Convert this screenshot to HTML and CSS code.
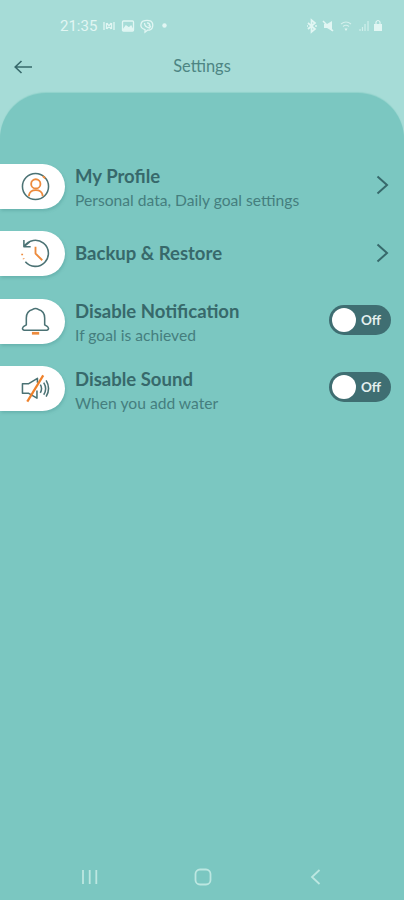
FILE: index.html
```html
<!DOCTYPE html>
<html lang="en">
<head>
<meta charset="utf-8">
<title>Settings</title>
<link rel="stylesheet" href="styles.css">
</head>
<body>
<div class="screen">
  <div class="status">
    <span class="clock">21:35</span>
    <svg class="status-left" width="70" height="16" viewBox="0 0 70 16" fill="none" stroke="currentColor" stroke-width="1.3">
      <path d="M2 4v8M4.500 5v6M12 4v8M9.500 5v6M5 5l4 6M9 5l-4 6"/>
      <rect x="20.500" y="3" width="11" height="10" rx="1"/><path d="M21 12l3-4 3 2 2-2 2 4z" fill="currentColor"/>
      <path d="M41 3.200q4-1.500 8 0 2.500 2 1.500 6-1 3-5 3l-2.500 2v-2.500Q38 10 39 6q.4-2 2-2.800z"/><path d="M42.500 5q0 4 5 5l1-1.500-2-1M45 4.800q3 .2 3 3"/>
      <circle cx="62.500" cy="7.500" r="2.200" fill="currentColor" stroke="none"/>
    </svg>
    <svg class="status-right" width="80" height="16" viewBox="0 0 80 16" fill="none" stroke="currentColor" stroke-width="1.200">
      <path d="M3 5l7 6-3.500 3V2L10 5l-7 6M2 8h1M10 8h2" stroke-width="1.700"/>
      <path d="M19 6h3l5-3v10l-5-3h-3z" fill="currentColor" stroke="none"/><path d="M18 3l10 10" stroke-width="1.500"/>
      <path d="M36 6q5-4 10 0M38 8.500q3-2.500 6 0" opacity=".75"/><path d="M39.500 10.500h3L41 13z" fill="currentColor" stroke="none"/>
      <path d="M55 13v-2M57.500 13V9M60 13V6M63 13V3" opacity=".7"/>
      <path d="M69 6h8v7h-8z" fill="currentColor" stroke="none"/><path d="M71 7V4q2-3 4 0v3"/>
    </svg>
  </div>
  <header class="header">
    <svg class="back" width="20" height="16" viewBox="0 0 20 16"><path d="M18 8H1.200M7.500 2L1.200 8l6.300 6"/></svg>
    <h1 class="title">Settings</h1>
  </header>
  <main class="panel">
    <div class="row">
      <div class="pill"><svg class="icon" viewBox="0 0 30 30"><circle cx="15" cy="15" r="13.500"/><g class="accent"><circle cx="15.300" cy="12.300" r="4.800"/><path d="M8.300 25.200v-1.500q1-5 7-5t7 5v1.500M22.500 4.200l2.500 2.300"/></g></svg></div>
      <div class="copy"><h2 class="name">My Profile</h2><p class="note">Personal data, Daily goal settings</p></div>
      <svg class="chevron" width="13" height="20" viewBox="0 0 13 20"><path d="M1.500 1.500L11 10l-9.500 8.500"/></svg>
    </div>
    <div class="row">
      <div class="pill"><svg class="icon" viewBox="0 0 30 30"><path d="M3.500 7.500A13.500 13.500 0 1 1 4.500 23.500M3 1v7h7M3 8l6-5"/><g class="accent"><path d="M15 8v7l7 7M1.200 15.200v1.500M2.500 20l.4.800"/></g></svg></div>
      <div class="copy"><h2 class="name">Backup &amp; Restore</h2></div>
      <svg class="chevron" width="13" height="20" viewBox="0 0 13 20"><path d="M1.500 1.500L11 10l-9.500 8.500"/></svg>
    </div>
    <div class="row">
      <div class="pill"><svg class="icon" viewBox="0 0 30 30"><path d="M5.500 18.500v-7q0-7.500 6.500-9 3-2 6 0 6.500 1.500 6.500 9v7l3 1.800q2.300 3-.7 3.700H3.200q-3-.7-.7-3.700z"/><path class="clapper" d="M11.300 27.200h7.500"/></svg></div>
      <div class="copy"><h2 class="name">Disable Notification</h2><p class="note">If goal is achieved</p></div>
      <div class="toggle"><span class="knob"></span><span class="state">Off</span></div>
    </div>
    <div class="row">
      <div class="pill"><svg class="icon" viewBox="0 0 30 30"><path d="M17 9V4.500L8 10H1.500v10H8l8.500 5v-8M20 11q2.500 4 0 8.500M23.500 9q4 6.500 0 12.500M26 6.500q5 8.500 0 17"/><path class="slash" d="M23 1.500L6.500 28.500"/></svg></div>
      <div class="copy"><h2 class="name">Disable Sound</h2><p class="note">When you add water</p></div>
      <div class="toggle"><span class="knob"></span><span class="state">Off</span></div>
    </div>
  </main>
  <nav class="nav">
    <svg width="18" height="18" viewBox="0 0 18 18"><path d="M2 2v14M8.700 2v14M15.300 2v14"/></svg>
    <svg width="18" height="18" viewBox="0 0 18 18"><rect x="1.500" y="1.500" width="15" height="15" rx="4.500"/></svg>
    <svg width="18" height="18" viewBox="0 0 18 18"><path d="M12.500 2L5 9l7.500 7"/></svg>
  </nav>
</div>
</body>
</html>
```
FILE: styles.css
```css
* { box-sizing: border-box; margin: 0; padding: 0; }
body { font-family: Lato, "Liberation Sans", sans-serif; color: #37696b; background: #a6dcd7; }
svg { display: block; flex: none; fill: none; }
.screen { width: 404px; height: 900px; display: flex; flex-direction: column; overflow: hidden; background: #a6dcd7; }
.status { height: 50px; padding: 1px 19px 0 60px; display: flex; align-items: center; color: #e1f6f3; }
.clock { width: 41px; font: 400 15px Roboto, sans-serif; }
.status-left { margin-left: 1px; }
.status-right { margin-left: auto; }
.header { height: 43px; display: flex; align-items: flex-start; padding: 8px 14px 0; }
.back { margin-top: .5px; stroke: #37696b; stroke-width: 1.600; }
.title { flex: 1; margin-right: 20px; text-align: center; font-size: 16.400px; line-height: 15px; font-weight: 400; color: #4d8583; }
.panel { flex: 1; border-radius: 46px 46px 0 0; background: #7bc7c1; padding-top: 70.500px; box-shadow: 0 -1px 1px #91d2cb; }
.row { height: 67.500px; display: flex; align-items: flex-start; }
.pill { width: 65px; height: 45px; flex: none; padding: 8px 0 0 21px; border-radius: 0 23px 23px 0; background: #fff; box-shadow: 1px 2px 3px #4d999766; }
.icon { width: 29px; height: 29px; stroke: #4b7274; stroke-width: 1.600; stroke-linejoin: round; }
.accent { stroke: #ed8b3d; stroke-width: 1.900; }
.clapper { stroke: #ed8b3d; stroke-width: 2.800; }
.slash { stroke: #ef812b; stroke-width: 2.300; }
.copy { flex: 1; height: 49px; margin-left: 10px; display: flex; flex-direction: column; justify-content: center; white-space: nowrap; }
.name { font-size: 18.550px; line-height: 24px; font-weight: 700; color: #37696b; }
.name:only-child { margin-top: -5px; }
.note { font-size: 15.650px; line-height: 24px; color: #457e7e; }
.chevron { margin: 11.500px 15.500px 0 0; stroke: #37696b; stroke-width: 2; }
.toggle { width: 62px; height: 30px; margin: 6px 13px 0 0; padding: 0 10px 0 3px; display: flex; align-items: center; justify-content: space-between; border-radius: 15px; background: #3f6e72; }
.knob { width: 24px; height: 24px; border-radius: 50%; background: #fff; }
.state { font-size: 13.500px; font-weight: 700; color: #e4f0ef; }
.nav { height: 32px; padding: 0 79px 0 81px; display: flex; justify-content: space-between; background: #7bc7c1; }
.nav svg { stroke: #bce7e1; stroke-width: 1.800; }
```
